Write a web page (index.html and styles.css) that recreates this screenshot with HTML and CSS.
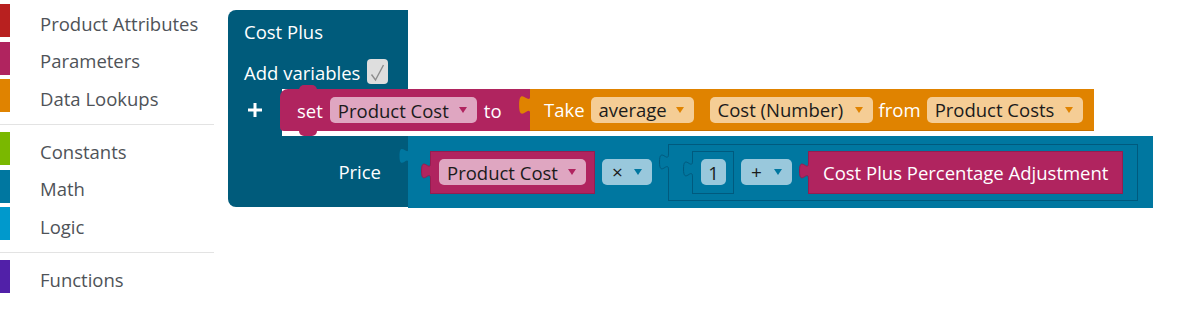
FILE: index.html
```html
<!DOCTYPE html>
<html>
<head>
<meta charset="utf-8">
<title>Cost Plus</title>
<link rel="stylesheet" href="styles.css">
</head>
<body>
<div class="app">
  <nav class="toolbox">
    <div class="group">
      <div class="cat"><span class="swatch c-attr"></span><span class="label">Product Attributes</span></div>
      <div class="cat"><span class="swatch c-param"></span><span class="label">Parameters</span></div>
      <div class="cat"><span class="swatch c-data"></span><span class="label">Data Lookups</span></div>
    </div>
    <div class="sep"></div>
    <div class="group">
      <div class="cat"><span class="swatch c-const"></span><span class="label">Constants</span></div>
      <div class="cat"><span class="swatch c-math"></span><span class="label">Math</span></div>
      <div class="cat"><span class="swatch c-logic"></span><span class="label">Logic</span></div>
    </div>
    <div class="sep"></div>
    <div class="group">
      <div class="cat"><span class="swatch c-func"></span><span class="label">Functions</span></div>
    </div>
  </nav>

  <main class="workspace">
    <div class="proc">
      <div class="proc-head">
        <div class="proc-title">Cost Plus</div>
        <div class="proc-vars">Add variables <span class="chk"><svg width="21" height="25" viewBox="0 0 21 25"><polyline points="4.5,15.5 8.5,21 16.5,6" fill="none" stroke="#8c8c8c" stroke-width="1.4"/></svg></span></div>
      </div>

      <div class="proc-stmt">
        <div class="proc-arm">
          <svg class="plus" width="14" height="14" viewBox="0 0 14 14"><rect x="5.5" y="0" width="3" height="14" fill="#fff"/><rect x="0" y="5.5" width="14" height="3" fill="#fff"/></svg>
        </div>
        <div class="stmt">
          <div class="blk set">
            <span class="txt">set</span>
            <span class="pill pill-pink w-pc"><span>Product Cost</span><i class="arr"></i></span>
            <span class="txt">to</span>
          </div>
          <div class="blk take">
            <svg class="tab tab-big" viewBox="0 0 12 22" preserveAspectRatio="none"><path d="M11.5,0 V3 c0,10 -9,-8 -9,8 s9,-2.5 9,8 V22 H12 V0 Z" fill="#e08300"/></svg>
            <span class="txt">Take</span>
            <span class="pill pill-orange w-avg"><span>average</span><i class="arr"></i></span>
            <span class="pill pill-orange w-cost sp"><span>Cost (Number)</span><i class="arr"></i></span>
            <span class="txt">from</span>
            <span class="pill pill-orange w-pcs"><span>Product Costs</span><i class="arr"></i></span>
          </div>
        </div>
      </div>

      <div class="proc-price">
        <div class="price-label">Price</div>
        <div class="blk math">
          <svg class="tab tab-plain" viewBox="0 0 12 22"><path d="M11.5,0 V3 c0,10 -9,-8 -9,8 s9,-2.5 9,8 V22 H12 V0 Z" fill="#0077a0"/></svg>

          <div class="blk val mag w-pcblk">
            <svg class="tab tab-b" viewBox="0 0 12 22"><path d="M11.5,0 V3 c0,10 -9,-8 -9,8 s9,-2.5 9,8 V22 H12 V0 Z" fill="#b0245f"/><path d="M11.5,0 V3 c0,10 -9,-8 -9,8 s9,-2.5 9,8 V22" fill="none" stroke="#931e50" stroke-width="1"/></svg>
            <span class="pill pill-pink w-pc"><span>Product Cost</span><i class="arr"></i></span>
          </div>

          <span class="pill pill-blue w-op"><span class="op">×</span><i class="arr"></i></span>

          <div class="blk nest">
            <svg class="tab tab-b tab-n" viewBox="0 0 12 22"><path d="M11.5,0 V3 c0,10 -9,-8 -9,8 s9,-2.5 9,8 V22 H12 V0 Z" fill="#0077a0"/><path d="M11.5,0 V3 c0,10 -9,-8 -9,8 s9,-2.5 9,8 V22" fill="none" stroke="#005a7e" stroke-width="1"/></svg>

            <div class="blk val num">
              <svg class="tab tab-b tab-n" viewBox="0 0 12 22"><path d="M11.5,0 V3 c0,10 -9,-8 -9,8 s9,-2.5 9,8 V22 H12 V0 Z" fill="#0077a0"/><path d="M11.5,0 V3 c0,10 -9,-8 -9,8 s9,-2.5 9,8 V22" fill="none" stroke="#005a7e" stroke-width="1"/></svg>
              <span class="pill pill-blue w-one"><span>1</span></span>
            </div>

            <span class="pill pill-blue w-op2"><span class="op">+</span><i class="arr"></i></span>

            <div class="blk val mag w-cpp">
              <svg class="tab tab-b" viewBox="0 0 12 22"><path d="M11.5,0 V3 c0,10 -9,-8 -9,8 s9,-2.5 9,8 V22 H12 V0 Z" fill="#b0245f"/><path d="M11.5,0 V3 c0,10 -9,-8 -9,8 s9,-2.5 9,8 V22" fill="none" stroke="#931e50" stroke-width="1"/></svg>
              <span class="txt">Cost Plus Percentage Adjustment</span>
            </div>
          </div>
        </div>
      </div>
    </div>
  </main>
</div>
</body>
</html>
```

FILE: styles.css
```css
* { box-sizing: border-box; margin: 0; padding: 0; }

body {
  background: #ffffff;
  font-family: "Open Sans", "Noto Sans", sans-serif;
}

.app {
  display: flex;
  align-items: flex-start;
}

/* ---------- toolbox ---------- */
.toolbox {
  width: 214px;
  flex: none;
  padding-top: 4px;
}

.group {
  display: flex;
  flex-direction: column;
  gap: 4.5px;
}

.cat {
  display: flex;
  align-items: center;
  height: 33px;
  gap: 30px;
}

.swatch {
  width: 10px;
  height: 33px;
  flex: none;
}

.label {
  font-size: 18.5px;
  color: #4f5358;
  padding-top: 5px;
}

.sep {
  height: 1px;
  background: #e3e3e3;
  margin: 11.5px 0 7.5px;
}

.c-attr  { background: #b8201f; }
.c-param { background: #b0245f; }
.c-data  { background: #e08300; }
.c-const { background: #7ab800; }
.c-math  { background: #0077a0; }
.c-logic { background: #0099cc; }
.c-func  { background: #5120a8; }

/* ---------- workspace ---------- */
.workspace {
  flex: 1;
  padding: 10px 0 0 14px;
}

.proc {
  display: flex;
  flex-direction: column;
  align-items: flex-start;
  color: #fff;
  font-size: 18.5px;
}

.proc-head {
  width: 180px;
  background: #005b7b;
  border-radius: 8px 0 0 0;
  padding-left: 16px;
}

.proc-title {
  height: 44px;
  line-height: 44px;
}

.proc-vars {
  height: 35px;
  display: flex;
  align-items: center;
  gap: 7px;
  padding-top: 2px;
}

.chk {
  width: 21px;
  height: 25px;
  border-radius: 4px;
  background: #dedede;
  display: block;
  margin-top: -2px;
}

.chk svg { display: block; }

.proc-stmt {
  display: flex;
  height: 47px;
}

.proc-arm {
  width: 54px;
  background: #005b7b;
  display: flex;
  justify-content: center;
  padding: 14px 0 0 0;
}

.plus { display: block; }

.stmt {
  display: flex;
  height: 42px;
  margin-left: -2px;
}

/* ---------- blocks ---------- */
.blk {
  position: relative;
  display: flex;
  align-items: center;
  flex: none;
  color: #fff;
  font-size: 18.5px;
}

.txt { white-space: nowrap; }

.set {
  width: 250px;
  height: 42px;
  background: #b0245f;
  border-radius: 8px 0 0 4px;
  padding-left: 17px;
  gap: 7px;
}

.set::before,
.set::after {
  content: "";
  position: absolute;
  left: 19px;
  width: 18px;
  height: 5px;
  background: #b0245f;
}

.set::before {
  top: -4px;
  border-radius: 5px 5px 0 0;
}

.set::after {
  bottom: -5px;
  border-radius: 0 0 5px 5px;
}

.take {
  width: 564px;
  height: 42px;
  background: #e08300;
  border-bottom: 1px solid #c46f00;
  padding-left: 14px;
  gap: 6px;
}

.take .sp { margin-left: 10px; }

.proc-price {
  display: flex;
}

.price-label {
  width: 180px;
  height: 71px;
  background: #005b7b;
  border-radius: 0 0 0 8px;
  display: flex;
  align-items: center;
  justify-content: flex-end;
  padding-right: 27px;
}

.math {
  height: 72px;
  background: #0077a0;
  padding: 0 15px 0 22px;
  gap: 7px;
}

.val {
  height: 43px;
  padding: 0 8px;
}

.mag {
  background: #b0245f;
  border: 1px solid #931e50;
}

.w-pcblk { width: 165px; }
.w-cpp { width: 315px; padding-left: 14px; }

.nest {
  height: 57px;
  margin-left: 9px;
  background: #0077a0;
  border: 1px solid #005a7e;
  padding: 0 14px 0 23px;
  gap: 7px;
}

.nest .w-cpp { margin-left: 9px; }

.num {
  width: 42px;
  background: #0077a0;
  border: 1px solid #005a7e;
}

/* ---------- tabs ---------- */
.tab {
  position: absolute;
  width: 12px;
  height: 22px;
  overflow: visible;
}

.tab-plain { left: -11px; top: 9px; }
.tab-b { left: -12px; top: 8px; }
.tab-n { top: 6px; }
.tab-big { left: -14px; top: 2px; width: 15px; height: 28px; }

/* ---------- dropdown pills ---------- */
.pill {
  height: 26px;
  border-radius: 5px;
  display: flex;
  align-items: center;
  justify-content: space-between;
  padding: 0 10px 0 8px;
  color: #1b1b1b;
  font-size: 18.5px;
  white-space: nowrap;
  flex: none;
}

.arr {
  width: 0;
  height: 0;
  border-left: 4px solid transparent;
  border-right: 4px solid transparent;
  border-top: 6px solid;
}

.pill-pink   { background: #dfa6c1; }
.pill-pink .arr   { border-top-color: #b0245f; }
.pill-orange { background: #f5cd95; }
.pill-orange .arr { border-top-color: #e08300; }
.pill-blue   { background: #99c8dc; }
.pill-blue .arr   { border-top-color: #0077a0; }

.w-pc  { width: 147px; }
.w-avg { width: 103px; }
.w-cost { width: 163px; }
.w-pcs { width: 156px; }
.w-op  { width: 50px; padding-left: 10px; }
.w-op2 { width: 51px; padding-left: 10px; }
.w-one { width: 25px; justify-content: center; padding: 0; }

.op { font-size: 19px; }
```
